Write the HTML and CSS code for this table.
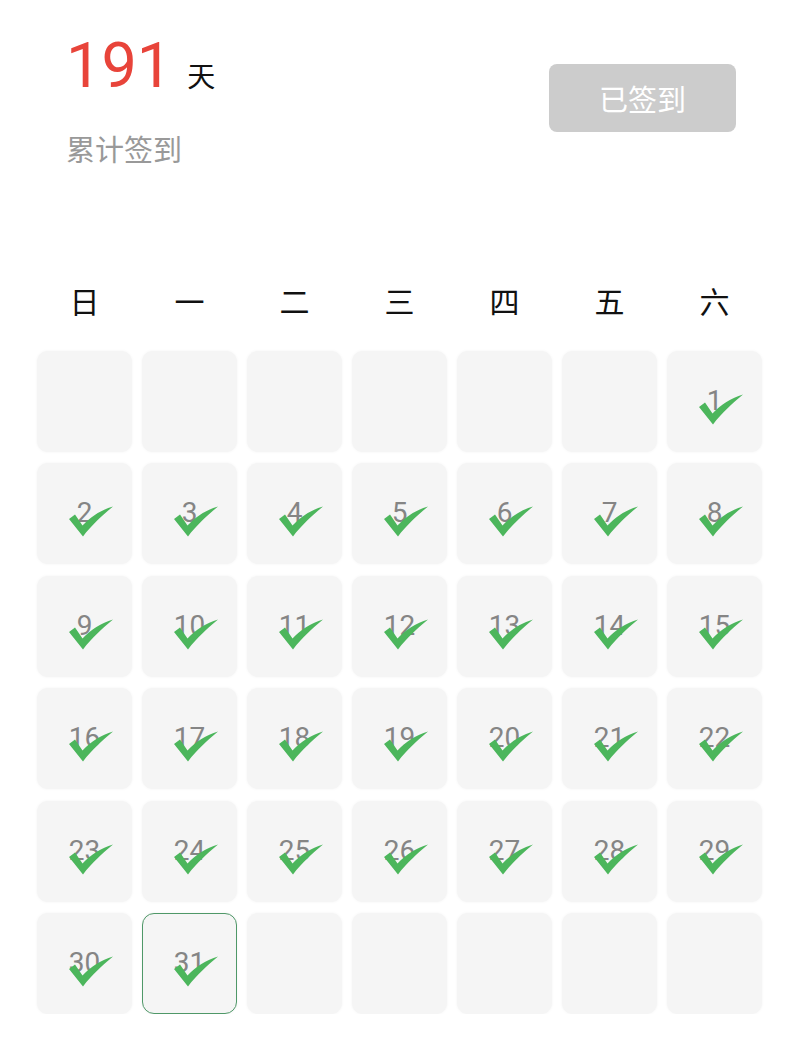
FILE: index.html
```html
<!DOCTYPE html>
<html lang="zh">
<head>
<meta charset="utf-8">
<link rel="stylesheet" href="styles.css">
</head>
<body>
<div class="page">
  <header class="header">
    <div class="summary">
      <div class="total"><span class="count">191</span><span class="unit">天</span></div>
      <div class="label">累计签到</div>
    </div>
    <button class="signed">已签到</button>
  </header>

  <div class="weekdays">
    <div>日</div><div>一</div><div>二</div><div>三</div><div>四</div><div>五</div><div>六</div>
  </div>

  <div class="calendar" id="calendar"></div>
</div>
<script src="app.js"></script>
</body>
</html>
```

FILE: app.js
```js
(function () {
  var cal = document.getElementById('calendar');
  var check = '<svg class="check" viewBox="0 0 44 30" aria-hidden="true"><path d="M0,12.5 L6,8 L13.5,19 C22,10 32,3.5 44,0 C34,8.5 23,18 14,30 Z"/></svg>';
  var lead = 6, days = 31, total = 42;
  for (var i = 0; i < total; i++) {
    var d = i - lead + 1;
    var cell = document.createElement('div');
    cell.className = 'day';
    if (d >= 1 && d <= days) {
      if (d === days) cell.className += ' today';
      cell.innerHTML = '<span class="num">' + d + '</span>' + check;
    }
    cal.appendChild(cell);
  }
})();
```

FILE: styles.css
```css
* { box-sizing: border-box; }
html, body { margin: 0; padding: 0; background: #fff; }
body {
  font-family: "Noto Sans CJK SC", "Noto Sans", sans-serif;
  color: #222;
}
.page { width: 800px; }

.header {
  display: flex;
  justify-content: space-between;
  align-items: flex-start;
  padding: 34px 64px 0 66px;
  height: 250px;
}
.total {
  display: flex;
  align-items: baseline;
}
.count {
  font-family: Roboto, "Liberation Sans", sans-serif;
  font-size: 63px;
  line-height: 64px;
  color: #e8443a;
}
.unit {
  font-size: 28px;
  color: #111;
  margin-left: 15px;
}
.label {
  margin-top: 34px;
  font-size: 29px;
  line-height: 32px;
  color: #999;
}
.signed {
  margin-top: 30px;
  width: 187px;
  height: 68px;
  border: none;
  border-radius: 8px;
  background: #cccccc;
  color: #fff;
  font-family: "Noto Sans CJK SC", sans-serif;
  font-size: 29px;
  padding: 0;
}

.weekdays, .calendar {
  display: grid;
  grid-template-columns: repeat(7, 95px);
  column-gap: 10px;
  padding-left: 37px;
}
.weekdays {
  height: 101px;
  align-items: start;
}
.weekdays div {
  text-align: center;
  font-size: 30px;
  line-height: 36px;
  margin-top: 32px;
  color: #111;
}
.calendar {
  grid-auto-rows: 101px;
  row-gap: 11.4px;
}
.day {
  position: relative;
  background: #f5f5f5;
  border-radius: 11px;
  box-shadow: 0 0 3px rgba(0, 0, 0, 0.05);
  display: flex;
  align-items: center;
  justify-content: center;
}
.day.today {
  border: 1px solid #4f9868;
  border-radius: 12px;
}
.num {
  font-family: Roboto, "Liberation Sans", sans-serif;
  font-size: 28px;
  color: #858585;
  margin-top: -2px;
}
.check {
  position: absolute;
  left: 32px;
  top: 43px;
  width: 44px;
  height: 31px;
  fill: #4cb65c;
}
.today .check { left: 31px; top: 42px; }
```
